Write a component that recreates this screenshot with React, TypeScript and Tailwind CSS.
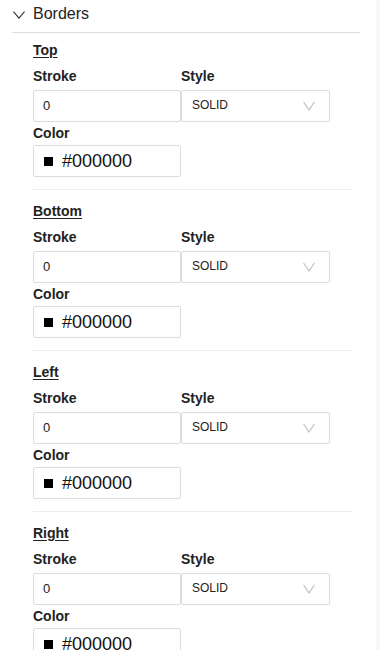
import React from "react";

const font = { fontFamily: '"Liberation Sans", Arial, sans-serif' };

function Chevron({ className }: { className?: string }) {
  return (
    <svg viewBox="0 0 12 8" className={className} fill="none" stroke="currentColor" strokeWidth="1.1" preserveAspectRatio="none">
      <path d="M0.5 0.7 L6 7.2 L11.5 0.7" />
    </svg>
  );
}

function Section({ title, first, last }: { title: string; first?: boolean; last?: boolean }) {
  return (
    <div className={`ml-[33px] w-[320px] ${last ? "" : "border-b border-[#ececec]"} ${first ? "pt-[8px]" : "pt-[12px]"} pb-[12px]`}>
      <div className="h-[18px] flex items-center text-[14px] font-bold text-[#222] underline underline-offset-[2px]">{title}</div>
      <div className="mt-[8px] flex">
        <div className="w-[148px]">
          <div className="h-[18px] flex items-center text-[14px] font-bold text-[#222]">Stroke</div>
          <div className="mt-[5px] h-[32px] w-[148px] border border-[#dcdcdc] rounded-[2px] flex items-center pl-[9px] text-[13px] text-[#222]">0</div>
        </div>
        <div className="w-[149px]">
          <div className="h-[18px] flex items-center text-[14px] font-bold text-[#222]">Style</div>
          <div className="mt-[5px] h-[32px] w-[149px] border border-[#dcdcdc] rounded-[2px] flex items-center justify-between pl-[10px] pr-[14px] text-[12px] text-[#222]">
            <span className="-mt-[2px]">SOLID</span>
            <Chevron className="w-[12px] h-[10px] text-[#c2c2c2]" />
          </div>
        </div>
      </div>
      <div className="mt-[2px] h-[18px] flex items-center text-[14px] font-bold text-[#222]">Color</div>
      <div className="mt-[3px] h-[32px] w-[148px] border border-[#dcdcdc] rounded-[2px] flex items-center pl-[10px] text-[18px] text-[#111]">
        <span className="w-[9px] h-[9px] bg-black mr-[9px]" />
        <span>#000000</span>
      </div>
    </div>
  );
}

export default function App() {
  return (
    <div className="w-[380px] h-[650px] overflow-hidden bg-white flex" style={font}>
      <div className="w-[376px]">
        <div className="h-[28px] flex items-center pl-[13px]">
          <Chevron className="w-[12px] h-[8px] text-[#333] mr-[8px] mt-[1px]" />
          <span className="text-[16px] text-[#222]">Borders</span>
        </div>
        <div className="mt-[4px] ml-[12px] w-[348px] h-px bg-[#dddddd]" />
        <Section title="Top" first />
        <Section title="Bottom" />
        <Section title="Left" />
        <Section title="Right" last />
      </div>
      <div className="w-[4px] h-full bg-[#f7f7f7]" />
    </div>
  );
}
